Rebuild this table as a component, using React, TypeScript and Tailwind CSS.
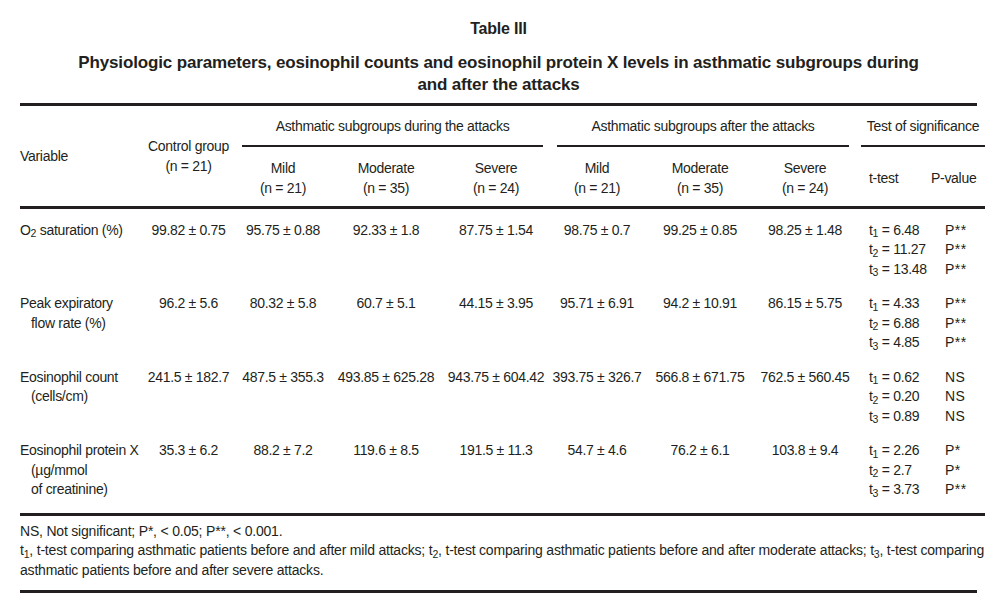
import React from "react";

type Row = {
	label: React.ReactNode[];
	vals: string[];
	t: string[];
	p: string[];
};

const rows: Row[] = [
	{
		label: [
			<>
				O<sub>2</sub> saturation (%)
			</>,
		],
		vals: ["99.82 ± 0.75", "95.75 ± 0.88", "92.33 ± 1.8", "87.75 ± 1.54", "98.75 ± 0.7", "99.25 ± 0.85", "98.25 ± 1.48"],
		t: ["6.48", "11.27", "13.48"],
		p: ["P**", "P**", "P**"],
	},
	{
		label: ["Peak expiratory", "flow rate (%)"],
		vals: ["96.2 ± 5.6", "80.32 ± 5.8", "60.7 ± 5.1", "44.15 ± 3.95", "95.71 ± 6.91", "94.2 ± 10.91", "86.15 ± 5.75"],
		t: ["4.33", "6.88", "4.85"],
		p: ["P**", "P**", "P**"],
	},
	{
		label: ["Eosinophil count", "(cells/cm)"],
		vals: ["241.5 ± 182.7", "487.5 ± 355.3", "493.85 ± 625.28", "943.75 ± 604.42", "393.75 ± 326.7", "566.8 ± 671.75", "762.5 ± 560.45"],
		t: ["0.62", "0.20", "0.89"],
		p: ["NS", "NS", "NS"],
	},
	{
		label: ["Eosinophil protein X", "(µg/mmol", "of creatinine)"],
		vals: ["35.3 ± 6.2", "88.2 ± 7.2", "119.6 ± 8.5", "191.5 ± 11.3", "54.7 ± 4.6", "76.2 ± 6.1", "103.8 ± 9.4"],
		t: ["2.26", "2.7", "3.73"],
		p: ["P*", "P*", "P**"],
	},
];

const subgroups = [
	["Mild", "(n = 21)"],
	["Moderate", "(n = 35)"],
	["Severe", "(n = 24)"],
];

const App = () => {
	return (
		<div className="w-[997px] h-[605px] bg-white text-[#231f20] font-['Liberation_Sans',Arial,sans-serif] overflow-hidden">
			<div className="pt-[19px] text-center font-bold text-[16px] leading-[20px] tracking-[-0.2px]">
				Table III
			</div>
			<div className="pt-[13px] text-center font-bold text-[17px] leading-[22px] tracking-[-0.15px]">
				Physiologic parameters, eosinophil counts and eosinophil protein X levels in asthmatic subgroups during
				<br />
				and after the attacks
			</div>

			<div className="mx-[20px] mt-[7px] border-t-[3px] border-[#231f20]">
				<table className="w-[965px] table-fixed border-collapse text-[14px] leading-[19.5px] tracking-[-0.3px]">
					<colgroup>
						<col className="w-[120px]" />
						<col className="w-[97px]" />
						<col className="w-[92px]" />
						<col className="w-[114px]" />
						<col className="w-[106px]" />
						<col className="w-[96px]" />
						<col className="w-[110px]" />
						<col className="w-[100px]" />
						<col className="w-[76px]" />
						<col className="w-[54px]" />
					</colgroup>
					<thead className="leading-[20px]">
						<tr className="h-[41px]">
							<th rowSpan={2} className="text-left font-normal align-middle whitespace-nowrap">
								Variable
							</th>
							<th rowSpan={2} className="font-normal align-middle whitespace-nowrap">
								Control group
								<br />
								(n = 21)
							</th>
							<th colSpan={3} className="font-normal align-middle p-0">
								<div className="ml-[5px] mr-[6px] h-[41px] flex items-center justify-center whitespace-nowrap border-b-2 border-[#231f20]">
									Asthmatic subgroups during the attacks
								</div>
							</th>
							<th colSpan={3} className="font-normal align-middle p-0">
								<div className="ml-[8px] mr-[6px] h-[41px] flex items-center justify-center whitespace-nowrap border-b-2 border-[#231f20]">
									Asthmatic subgroups after the attacks
								</div>
							</th>
							<th colSpan={2} className="font-normal align-middle p-0">
								<div className="ml-[6px] h-[41px] flex items-center justify-center whitespace-nowrap border-b-2 border-[#231f20]">
									Test of significance
								</div>
							</th>
						</tr>
						<tr className="h-[60px]">
							{[0, 1].map((g) =>
								subgroups.map(([name, n]) => (
									<th key={`${g}-${name}`} className="font-normal align-middle whitespace-nowrap pt-[4px]">
										{name}
										<br />
										{n}
									</th>
								))
							)}
							<th className="font-normal align-middle text-left pl-[14px] pt-[4px]">t-test</th>
							<th className="font-normal align-middle text-left whitespace-nowrap pt-[4px]">P-value</th>
						</tr>
					</thead>
					<tbody className="border-t-[3px] border-b-[3px] border-[#231f20]">
						{rows.map((row, i) => {
							const pb = i === rows.length - 1 ? "pb-[13px]" : "pb-[3px]";
							return (
								<tr key={i}>
									<td className="align-top whitespace-nowrap pt-[12px]">
										{row.label.map((l, j) => (
											<div key={j} className={j > 0 ? "pl-[11px]" : ""}>
												{l}
											</div>
										))}
									</td>
									{row.vals.map((v, j) => (
										<td key={j} className="align-top text-center whitespace-nowrap pt-[12px]">
											{v}
										</td>
									))}
									<td className={`align-top whitespace-nowrap pt-[12px] pl-[14px] ${pb}`}>
										{row.t.map((t, j) => (
											<div key={j}>
												t<sub>{j + 1}</sub> = {t}
											</div>
										))}
									</td>
									<td className={`align-top whitespace-nowrap pt-[12px] pl-[14px] ${pb}`}>
										{row.p.map((p, j) => (
											<div key={j} className="tracking-[0.5px]">
												{p}
											</div>
										))}
									</td>
								</tr>
							);
						})}
					</tbody>
				</table>
				<div className="pt-[6px] pb-[10px] text-[14px] leading-[19.5px] tracking-[-0.2px] whitespace-nowrap border-b-[3px] border-[#231f20]">
					<div>NS, Not significant; P*, &lt; 0.05; P**, &lt; 0.001.</div>
					<div>
						t<sub>1</sub>, t-test comparing asthmatic patients before and after mild attacks; t<sub>2</sub>, t-test comparing asthmatic patients before and after moderate attacks; t<sub>3</sub>, t-test comparing
					</div>
					<div>asthmatic patients before and after severe attacks.</div>
				</div>
			</div>
		</div>
	);
};

export default App;
